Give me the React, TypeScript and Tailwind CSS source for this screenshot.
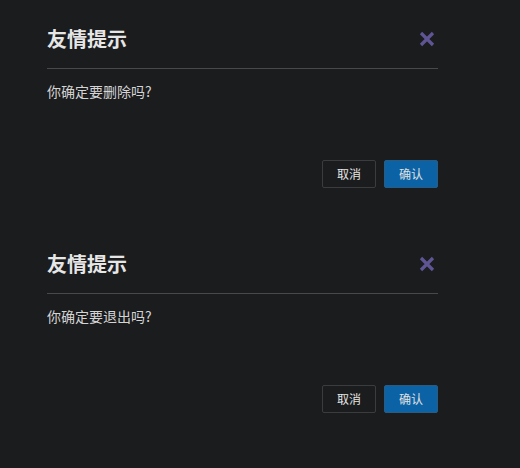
import React from 'react';

const dialogs = [
  { id: 'delete', title: '友情提示', message: '你确定要删除吗?' },
  { id: 'logout', title: '友情提示', message: '你确定要退出吗?' }
];

function ConfirmDialog({ title, message }: { title: string; message: string }) {
  return (
    <div className="w-[391px] ml-[47px] pt-[27px] pb-[37px]">
      <div className="flex items-center justify-between h-[24px]">
        <h3 className="text-[20px] leading-[24px] font-bold text-[#e6e6e6]">{title}</h3>
        <button type="button" className="w-[16px] h-[16px] mr-[3px] flex items-center justify-center text-[#5f5594]">
          <svg width="16" height="16" viewBox="0 0 16 16">
            <path d="M2 2 L14 14 M14 2 L2 14" stroke="currentColor" strokeWidth="3.2" strokeLinecap="butt" />
          </svg>
        </button>
      </div>
      <div className="mt-[17px] h-px bg-[#48494b]" />
      <p className="mt-[12px] text-[14px] leading-[20px] text-[#d4d4d4]">{message}</p>
      <div className="mt-[59px] flex justify-end gap-[8px]">
        <button
          type="button"
          className="w-[54px] h-[28px] border border-[#3b3c3e] rounded-[2px] text-[12px] text-[#e6e6e6] bg-transparent"
        >
          取消
        </button>
        <button
          type="button"
          className="w-[54px] h-[28px] border border-[#2a5b82] rounded-[2px] text-[12px] text-[#e0e0e0] bg-[#0b63a6]"
        >
          确认
        </button>
      </div>
    </div>
  );
}

export default function App() {
  return (
    <div
      className="w-[520px] h-[468px] bg-[#1b1c1e] overflow-hidden"
      style={{ fontFamily: '"Noto Sans CJK SC", "Liberation Sans", sans-serif' }}
    >
      {dialogs.map((d) => (
        <ConfirmDialog key={d.id} title={d.title} message={d.message} />
      ))}
    </div>
  );
}
